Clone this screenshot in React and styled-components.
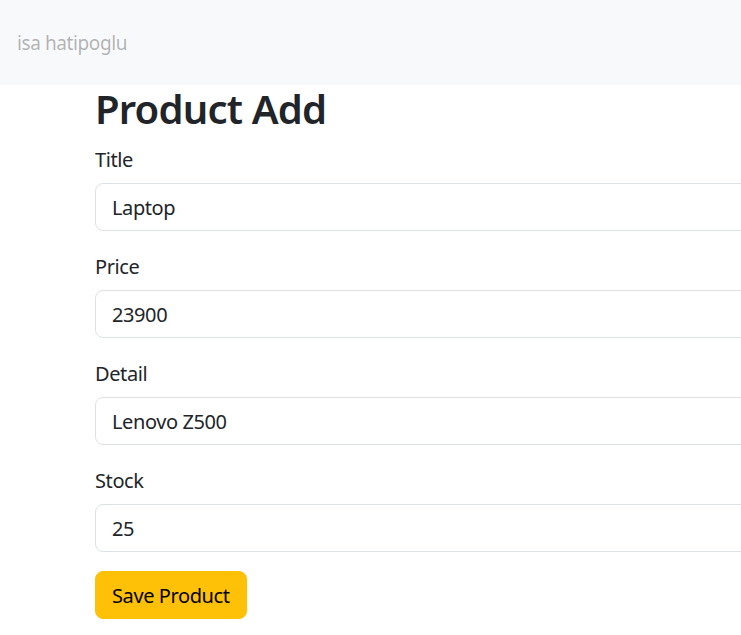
import React from "react";
import styled, { createGlobalStyle } from "styled-components";

const GlobalStyle = createGlobalStyle`
  html, body {
    margin: 0;
    padding: 0;
    overflow-x: hidden;
    background: #fff;
  }
  body {
    font-family: "Noto Sans", "Open Sans", sans-serif;
    color: #212529;
    letter-spacing: -0.025em;
  }
  * { box-sizing: border-box; }
`;

const Navbar = styled.nav`
  height: 85px;
  background: #f8f9fa;
  display: flex;
  align-items: center;
  padding-left: 17px;
`;

const Brand = styled.a`
  font-size: 19px;
  line-height: 30px;
  color: rgba(0, 0, 0, 0.3);
  text-decoration: none;
`;

const Container = styled.main`
  padding-left: 95px;
  width: 1100px;
`;

const Heading = styled.h1`
  margin: 0 0 12px;
  font-size: 40px;
  font-weight: 600;
  line-height: 48px;
  letter-spacing: -0.02em;
`;

const Field = styled.div`
  margin-bottom: 21px;
`;

const Label = styled.label`
  display: block;
  font-size: 20px;
  line-height: 30px;
  margin-bottom: 8px;
`;

const Input = styled.input`
  display: block;
  width: 100%;
  height: 48px;
  padding: 0 16px;
  font-family: inherit;
  letter-spacing: inherit;
  font-size: 20px;
  color: #212529;
  background: #fff;
  border: 1px solid #dee2e6;
  border-radius: 8px;
  outline: none;
`;

const Button = styled.button`
  height: 48px;
  padding: 0 16px;
  margin-top: -2px;
  font-family: inherit;
  letter-spacing: inherit;
  font-size: 20px;
  color: #000;
  background: #ffc107;
  border: 1px solid #ffc107;
  border-radius: 8px;
  cursor: pointer;
`;

const fields = [
  { label: "Title", value: "Laptop" },
  { label: "Price", value: "23900" },
  { label: "Detail", value: "Lenovo Z500" },
  { label: "Stock", value: "25" },
];

export default function App() {
  return (
    <>
      <GlobalStyle />
      <Navbar>
        <Brand href="#">isa hatipoglu</Brand>
      </Navbar>
      <Container>
        <Heading>Product Add</Heading>
        <form onSubmit={(e) => e.preventDefault()}>
          {fields.map((f) => (
            <Field key={f.label}>
              <Label>{f.label}</Label>
              <Input defaultValue={f.value} />
            </Field>
          ))}
          <Button type="submit">Save Product</Button>
        </form>
      </Container>
    </>
  );
}
